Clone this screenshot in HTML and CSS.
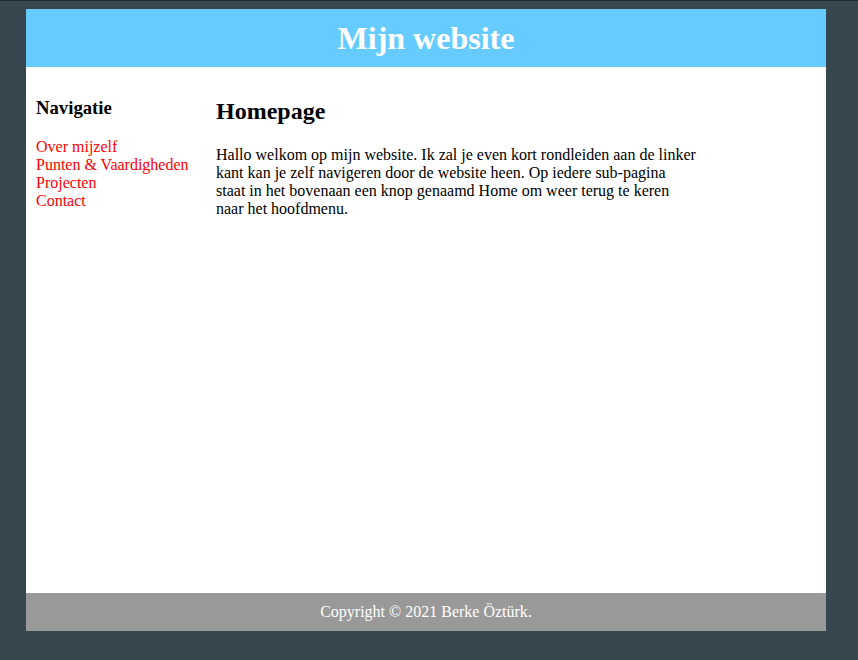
FILE: index.html
```html
<!DOCTYPE html>
<html lang="nl">
<head>
<meta charset="utf-8">
<title>Mijn website</title>
<link rel="stylesheet" href="styles.css">
</head>
<body>
<div class="page">
  <header class="header"><h1>Mijn website</h1></header>
  <div class="main">
    <nav class="sidebar">
      <h3>Navigatie</h3>
      <a href="#">Over mijzelf</a>
      <a href="#">Punten &amp; Vaardigheden</a>
      <a href="#">Projecten</a>
      <a href="#">Contact</a>
    </nav>
    <section class="content">
      <h2>Homepage</h2>
      <p>Hallo welkom op mijn website. Ik zal je even kort rondleiden aan de linker kant kan je zelf navigeren door de website heen. Op iedere sub-pagina staat in het bovenaan een knop genaamd Home om weer terug te keren naar het hoofdmenu.</p>
    </section>
  </div>
  <footer class="footer">Copyright © 2021 Berke Öztürk.</footer>
</div>
</body>
</html>
```
FILE: styles.css
```css
html, body {
  margin: 0;
  padding: 0;
}
body {
  background: #37474f;
  border-top: 1px solid #1f2a30;
  font-family: "Liberation Serif", "Times New Roman", serif;
  font-size: 16px;
  color: #000;
}
.page {
  width: 800px;
  margin: 8px 0 0 26px;
  display: flex;
  flex-direction: column;
}
.header {
  background: #66ccff;
  height: 58px;
  display: flex;
  align-items: center;
  justify-content: center;
}
.header h1 {
  margin: 0;
  color: #fff;
  font-size: 32px;
  font-weight: bold;
}
.main {
  background: #fff;
  height: 526px;
  display: flex;
  box-sizing: border-box;
}
.sidebar {
  width: 180px;
  box-sizing: border-box;
  padding: 11px 10px 10px;
  display: flex;
  flex-direction: column;
}
.sidebar h3 {
  font-size: 18.72px;
  margin: 18.72px 0 19.72px;
}
.sidebar a {
  color: #ff0000;
  text-decoration: none;
  line-height: 18px;
}
.content {
  padding: 11px 10px 10px;
  width: 482px;
}
.content h2 {
  font-size: 24px;
  margin: 19.92px 0 20.92px;
}
.content p {
  margin: 0;
  line-height: 18px;
}
.footer {
  background: #999999;
  color: #fff;
  height: 38px;
  display: flex;
  align-items: center;
  justify-content: center;
}
```
